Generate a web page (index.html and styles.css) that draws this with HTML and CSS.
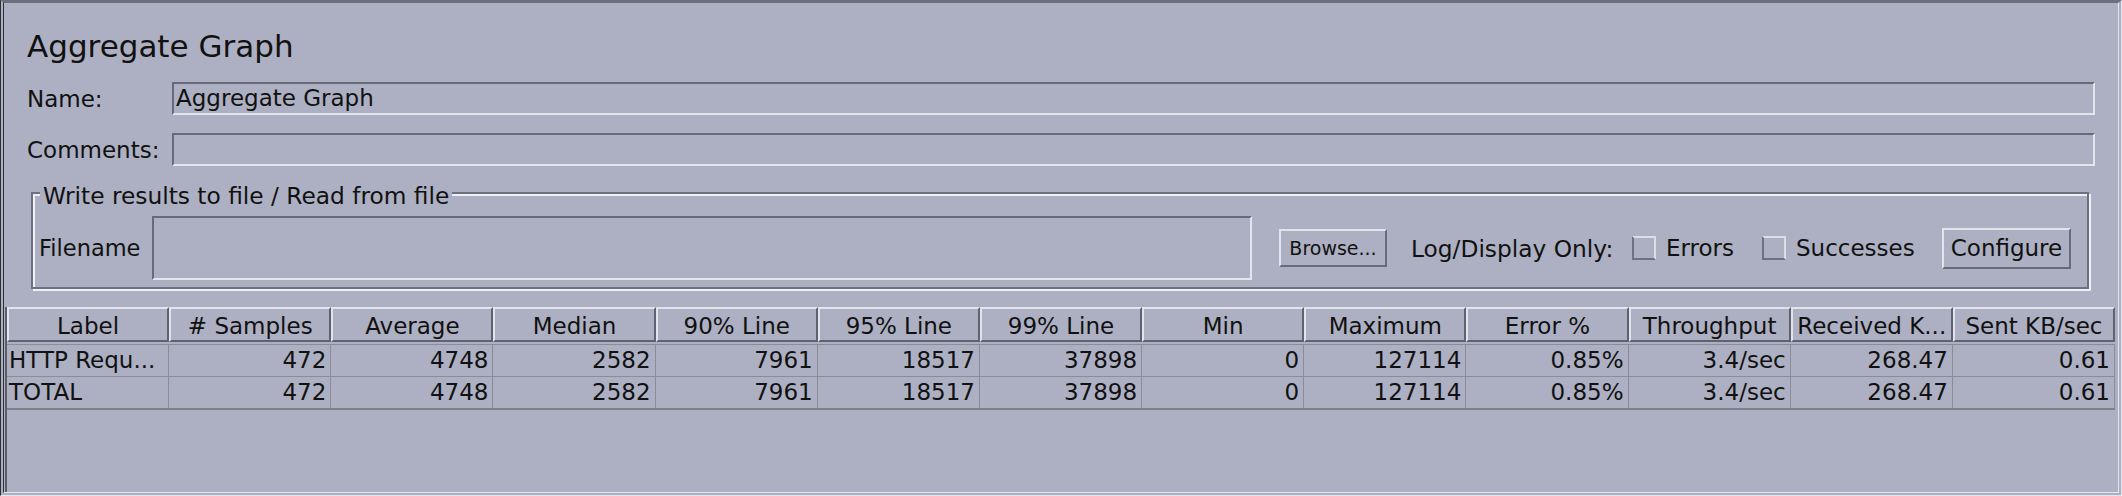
FILE: index.html
```html
<!DOCTYPE html>
<html>
<head>
<meta charset="utf-8">
<title>Aggregate Graph</title>
<link rel="stylesheet" href="styles.css">
</head>
<body>
<div class="frame">
  <div class="top">
    <div class="title">Aggregate Graph</div>
    <div class="field-row">
      <span class="lbl">Name:</span>
      <div class="input">Aggregate Graph</div>
    </div>
    <div class="field-row comments-row">
      <span class="lbl">Comments:</span>
      <div class="input"></div>
    </div>
    <div class="group">
      <div class="legend">Write results to file / Read from file</div>
      <div class="group-row">
        <span class="fn-label">Filename</span>
        <div class="input fn-input"></div>
        <div class="btn browse">Browse...</div>
        <span class="log-label">Log/Display Only:</span>
        <span class="check"></span><span class="check-label errors">Errors</span>
        <span class="check"></span><span class="check-label">Successes</span>
        <div class="btn configure">Configure</div>
      </div>
    </div>
  </div>
  <div class="scroll">
    <div class="table">
      <div class="thead">
        <div class="th">Label</div>
        <div class="th"># Samples</div>
        <div class="th">Average</div>
        <div class="th">Median</div>
        <div class="th">90% Line</div>
        <div class="th">95% Line</div>
        <div class="th">99% Line</div>
        <div class="th">Min</div>
        <div class="th">Maximum</div>
        <div class="th">Error %</div>
        <div class="th">Throughput</div>
        <div class="th">Received K...</div>
        <div class="th">Sent KB/sec</div>
      </div>
      <div class="tbody">
        <div class="trow">
          <div class="td first">HTTP Requ...</div>
          <div class="td">472</div>
          <div class="td">4748</div>
          <div class="td">2582</div>
          <div class="td">7961</div>
          <div class="td">18517</div>
          <div class="td">37898</div>
          <div class="td">0</div>
          <div class="td">127114</div>
          <div class="td">0.85%</div>
          <div class="td">3.4/sec</div>
          <div class="td">268.47</div>
          <div class="td">0.61</div>
        </div>
        <div class="trow last">
          <div class="td first">TOTAL</div>
          <div class="td">472</div>
          <div class="td">4748</div>
          <div class="td">2582</div>
          <div class="td">7961</div>
          <div class="td">18517</div>
          <div class="td">37898</div>
          <div class="td">0</div>
          <div class="td">127114</div>
          <div class="td">0.85%</div>
          <div class="td">3.4/sec</div>
          <div class="td">268.47</div>
          <div class="td">0.61</div>
        </div>
      </div>
    </div>
  </div>
</div>
</body>
</html>
```

FILE: styles.css
```css
* { box-sizing: border-box; }
html, body { margin: 0; padding: 0; }
body {
  width: 2122px;
  height: 496px;
  overflow: hidden;
  background: #adb0c2;
  font-family: "DejaVu Sans", sans-serif;
  color: #111;
}
.frame {
  width: 2122px;
  height: 496px;
  display: flex;
  flex-direction: column;
  background: #adb0c2;
  border-style: solid double double double;
  border-width: 3px 4px 4px 4px;
  border-color: #6b6e7b #e4e6ee #e4e6ee #2e3036;
}
.top {
  padding: 25px 23px 0 23px;
}
.title {
  font-size: 31px;
  line-height: 36px;
  height: 36px;
}
.field-row {
  display: flex;
  align-items: center;
  height: 33px;
  margin-top: 18px;
}
.comments-row { margin-top: 18px; }
.lbl {
  flex: 0 0 145px;
  font-size: 23px;
}
.input {
  flex: 1;
  height: 100%;
  border: 2px solid;
  border-color: #676a77 #e4e6ee #e4e6ee #676a77;
  font-size: 23px;
  line-height: 29px;
  padding-left: 2px;
  white-space: nowrap;
}
.group {
  margin: 26px 6px 0 4px;
  border: 2px solid #6e7180;
  box-shadow: inset 2px 2px 0 #eff0f5, 2px 2px 0 #eff0f5;
  padding: 0 16px 7px 6px;
}
.legend {
  width: fit-content;
  margin: -11px 0 0 1px;
  padding: 0 3px;
  background: #adb0c2;
  font-size: 23.3px;
  line-height: 26px;
  white-space: nowrap;
}
.group-row {
  display: flex;
  align-items: center;
  height: 64px;
  margin-top: 7px;
}
.fn-label {
  flex: 0 0 113px;
  font-size: 22.5px;
}
.fn-input {
  flex: 0 0 1100px;
  height: 64px;
}
.btn {
  border: 2px solid;
  border-color: #e2e4ec #676a77 #676a77 #e2e4ec;
  display: flex;
  align-items: center;
  justify-content: center;
  white-space: nowrap;
}
.browse {
  flex: 0 0 108px;
  height: 38px;
  margin-left: 27px;
  font-size: 19px;
}
.log-label {
  flex: 0 0 221px;
  margin-left: 24px;
  font-size: 23.3px;
  white-space: nowrap;
}
.check {
  flex: 0 0 24px;
  height: 24px;
  border: 2px solid;
  border-color: #dcdee6 #dcdee6 #6e7180 #6e7180;
  margin-right: 10px;
}
.check-label {
  font-size: 23px;
  white-space: nowrap;
}
.errors { flex: 0 0 96px; }
.configure {
  flex: 0 0 129px;
  height: 41px;
  margin-left: auto;
  font-size: 23px;
}
.scroll {
  flex: 1;
  margin: 18px 0 0 1px;
  border-left: 2px solid #5c5f6b;
}
.table { width: 2108px; }
.thead, .trow {
  display: grid;
  grid-template-columns: repeat(13, 1fr);
}
.th {
  height: 35px;
  border: 2px solid;
  border-color: #e2e4ec #5f6270 #5f6270 #e2e4ec;
  font-size: 23px;
  line-height: 26px;
  padding-top: 4px;
  text-align: center;
  white-space: nowrap;
  overflow: hidden;
}
.tbody {
  margin-top: 2px;
  border-top: 1px solid #8a8c96;
}
.trow {
  height: 32px;
  border-bottom: 1px solid #8a8c96;
}
.trow.last {
  height: 33px;
  border-bottom: 2px solid #7e808a;
}
.td {
  border-right: 1px solid #8a8c96;
  font-size: 23px;
  line-height: 31px;
  text-align: right;
  padding: 0 4px;
  white-space: nowrap;
  overflow: hidden;
}
.td.first {
  text-align: left;
  padding-left: 2px;
}
```
